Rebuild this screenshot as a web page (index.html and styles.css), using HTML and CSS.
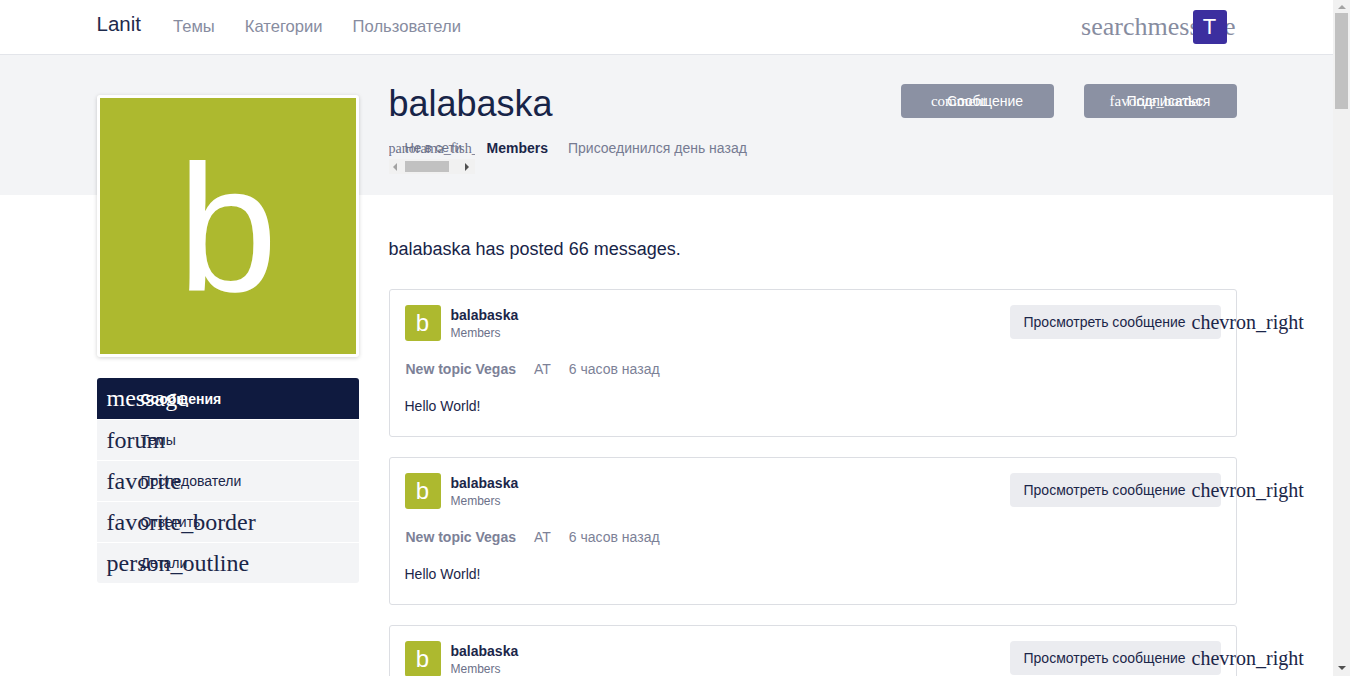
FILE: index.html
```html
<!DOCTYPE html>
<html lang="ru">
<head>
<meta charset="utf-8">
<title>balabaska</title>
<link rel="stylesheet" href="styles.css">
</head>
<body>
<div class="page">
<header class="topbar">
  <div class="container topbar-inner">
    <a class="brand">Lanit</a>
    <nav class="nav">
      <a class="nav-link">Темы</a>
      <a class="nav-link">Категории</a>
      <a class="nav-link">Пользователи</a>
    </nav>
    <div class="top-actions">
      <span class="ico ico-search">search</span>
      <span class="ico ico-msg">message</span>
      <span class="user-badge">T</span>
    </div>
  </div>
</header>

<div class="profile">
  <div class="container profile-grid">
    <aside class="sidebar">
      <div class="big-avatar">b</div>
      <ul class="menu">
        <li class="menu-item active"><span class="m-ico">message</span><span class="m-text">Сообщения</span></li>
        <li class="menu-item"><span class="m-ico">forum</span><span class="m-text">Темы</span></li>
        <li class="menu-item"><span class="m-ico">favorite</span><span class="m-text">Последователи</span></li>
        <li class="menu-item"><span class="m-ico">favorite_border</span><span class="m-text">Ответить</span></li>
        <li class="menu-item"><span class="m-ico">person_outline</span><span class="m-text">Детали</span></li>
      </ul>
    </aside>
    <main class="main">
      <section class="head">
        <div class="head-top">
          <h1 class="title">balabaska</h1>
          <div class="head-buttons">
            <button class="btn-gray"><span class="b-ico b-ico-1">comment</span>Сообщение</button>
            <button class="btn-gray"><span class="b-ico b-ico-2">favorite_border</span>Подписаться</button>
          </div>
        </div>
        <div class="meta">
          <div class="status">
            <div class="status-clip"><span class="status-inner"><span class="s-ico">panorama_fish_eye</span><span class="s-text">Не в сети</span></span></div>
            <div class="hscroll"><span class="arr-l"></span><span class="hthumb"></span><span class="arr-r"></span></div>
          </div>
          <span class="group">Members</span>
          <span class="joined">Присоединился день назад</span>
        </div>
      </section>
      <p class="count">balabaska has posted 66 messages.</p>
      <div class="posts">
        <article class="post">
          <div class="post-head">
            <div class="mini-avatar">b</div>
            <div class="author"><div class="a-name">balabaska</div><div class="a-group">Members</div></div>
            <button class="btn-light">Просмотреть сообщение<span class="chev">chevron_right</span></button>
          </div>
          <div class="post-meta"><span class="topic">New topic Vegas</span><span>AT</span><span>6 часов назад</span></div>
          <p class="post-body">Hello World!</p>
        </article>
        <article class="post">
          <div class="post-head">
            <div class="mini-avatar">b</div>
            <div class="author"><div class="a-name">balabaska</div><div class="a-group">Members</div></div>
            <button class="btn-light">Просмотреть сообщение<span class="chev">chevron_right</span></button>
          </div>
          <div class="post-meta"><span class="topic">New topic Vegas</span><span>AT</span><span>6 часов назад</span></div>
          <p class="post-body">Hello World!</p>
        </article>
        <article class="post">
          <div class="post-head">
            <div class="mini-avatar">b</div>
            <div class="author"><div class="a-name">balabaska</div><div class="a-group">Members</div></div>
            <button class="btn-light">Просмотреть сообщение<span class="chev">chevron_right</span></button>
          </div>
          <div class="post-meta"><span class="topic">New topic Vegas</span><span>AT</span><span>6 часов назад</span></div>
          <p class="post-body">Hello World!</p>
        </article>
        <article class="post">
          <div class="post-head">
            <div class="mini-avatar">b</div>
            <div class="author"><div class="a-name">balabaska</div><div class="a-group">Members</div></div>
            <button class="btn-light">Просмотреть сообщение<span class="chev">chevron_right</span></button>
          </div>
          <div class="post-meta"><span class="topic">New topic Vegas</span><span>AT</span><span>6 часов назад</span></div>
          <p class="post-body">Hello World!</p>
        </article>
      </div>
    </main>
  </div>
</div>
</div>
<div class="vscroll" aria-hidden="true">
  <span class="arr-up"></span>
  <span class="vthumb"></span>
  <span class="vspace"></span>
  <span class="arr-down"></span>
</div>
</body>
</html>
```

FILE: styles.css
```css
* { box-sizing: border-box; }
html, body { margin: 0; padding: 0; }
body {
  font-family: "Liberation Sans", Arial, sans-serif;
  color: #1b2649;
  background: #fff;
}
.page { margin-right: 17px; }
.container {
  max-width: 1140px;
  margin: 0 auto;
}
a { text-decoration: none; }

/* fake window scrollbar */
.vscroll {
  position: fixed;
  top: 0;
  right: 0;
  bottom: 0;
  width: 17px;
  background: #f1f1f1;
  display: flex;
  flex-direction: column;
  align-items: center;
}
.arr-up {
  margin-top: 5px;
  width: 0; height: 0;
  border-left: 4px solid transparent;
  border-right: 4px solid transparent;
  border-bottom: 4px solid #a3a3a3;
}
.vthumb {
  margin-top: 4px;
  width: 13px;
  height: 96px;
  background: #c1c1c1;
}
.vspace { flex: 1; }
.arr-down {
  margin-bottom: 6px;
  width: 0; height: 0;
  border-left: 4px solid transparent;
  border-right: 4px solid transparent;
  border-top: 4px solid #505050;
}

/* top bar */
.topbar {
  height: 55px;
  background: #fff;
  border-bottom: 1px solid #e3e5ea;
}
.topbar-inner {
  display: flex;
  align-items: center;
  height: 54px;
}
.brand {
  font-size: 20.5px;
  color: #1e2a4c;
  margin-top: -6px;
}
.nav {
  display: flex;
  gap: 30px;
  margin-left: 32px;
}
.nav-link {
  font-size: 16.6px;
  color: #878c9f;
}
.top-actions {
  margin-left: auto;
  margin-right: 10px;
  display: flex;
  align-items: center;
}
.ico {
  font-family: "Liberation Serif", "Times New Roman", serif;
  font-size: 26px;
  color: #878c9f;
  white-space: nowrap;
  display: inline-block;
  overflow: visible;
}
.ico-msg { width: 45px; }
.user-badge {
  position: relative;
  z-index: 1;
  width: 34px;
  height: 34px;
  border-radius: 3px;
  background: #3c2f9f;
  color: #fff;
  font-size: 22px;
  display: flex;
  align-items: center;
  justify-content: center;
}

/* profile */
.profile {
  background: linear-gradient(#f3f4f6 0, #f3f4f6 140px, #fff 140px);
  padding-bottom: 40px;
}
.profile-grid {
  display: grid;
  grid-template-columns: 262px 1fr;
  column-gap: 30px;
  align-items: start;
}
.sidebar { padding-top: 40px; }
.big-avatar {
  width: 262px;
  height: 262px;
  background: #adb92f;
  border: 3px solid #fff;
  border-radius: 3px;
  box-shadow: 0 1px 4px rgba(0,0,0,0.18);
  color: #fff;
  font-size: 180px;
  line-height: 262px;
  text-align: center;
}
.menu {
  list-style: none;
  margin: 21px 0 0;
  padding: 0;
  border-radius: 3px;
}
.menu-item {
  display: flex;
  align-items: center;
  height: 41px;
  padding-left: 10px;
  background: #f3f4f6;
  border-bottom: 1px solid #fff;
  font-size: 14px;
  color: #1b2649;
}
.menu-item:last-child { border-bottom: none; height: 40px; border-radius: 0 0 3px 3px; }
.menu-item.active {
  background: #0f1a3f;
  color: #fff;
  font-weight: bold;
  border-radius: 3px 3px 0 0;
  border-bottom: none;
  height: 41px;
  margin-bottom: 1px;
}
.m-ico {
  width: 24px;
  font-family: "Liberation Serif", "Times New Roman", serif;
  font-size: 24px;
  font-weight: normal;
  white-space: nowrap;
  overflow: visible;
  flex: none;
  margin-right: 10px;
}
.m-text { position: relative; }

/* main head */
.head {
  height: 140px;
  padding-top: 28px;
}
.head-top {
  display: flex;
  align-items: flex-start;
}
.title {
  margin: 0;
  font-size: 36px;
  font-weight: normal;
  line-height: 41px;
  color: #172448;
}
.head-buttons {
  margin-left: auto;
  display: flex;
  gap: 30px;
  padding-top: 1px;
}
.btn-gray {
  width: 153px;
  height: 34px;
  border: none;
  border-radius: 4px;
  background: #8b91a3;
  color: #fff;
  font-family: "Liberation Sans", Arial, sans-serif;
  font-size: 14px;
  display: flex;
  align-items: center;
  justify-content: center;
  padding: 0;
}
.b-ico {
  font-family: "Liberation Serif", "Times New Roman", serif;
  font-size: 15px;
  white-space: nowrap;
  overflow: visible;
  display: inline-block;
}
.b-ico-1 { width: 16px; }
.b-ico-2 { width: 17px; }

.meta {
  display: flex;
  align-items: flex-start;
  margin-top: 16px;
  font-size: 14px;
  line-height: 16px;
}
.status {
  width: 86px;
  margin-right: 12px;
}
.status-clip {
  width: 86px;
  overflow: hidden;
  white-space: nowrap;
}
.status-inner {
  display: inline-block;
  position: relative;
  color: #6c7189;
}
.s-ico {
  font-family: "Liberation Serif", "Times New Roman", serif;
  font-size: 14px;
}
.s-text {
  position: absolute;
  left: 16px;
  top: 0;
  font-size: 13px;
  color: #6c7189;
}
.hscroll {
  margin-top: 2px;
  height: 15px;
  background: #f1f1f1;
  display: flex;
  align-items: center;
  padding: 0 4px;
}
.arr-l {
  width: 0; height: 0;
  border-top: 4px solid transparent;
  border-bottom: 4px solid transparent;
  border-right: 4px solid #a3a3a3;
}
.hthumb {
  margin-left: 8px;
  width: 44px;
  height: 11px;
  background: #c1c1c1;
}
.arr-r {
  margin-left: auto;
  margin-right: 2px;
  width: 0; height: 0;
  border-top: 4px solid transparent;
  border-bottom: 4px solid transparent;
  border-left: 4px solid #505050;
}
.group {
  font-weight: bold;
  color: #1b2649;
  margin-right: 20px;
}
.joined { color: #767b92; }

.count {
  margin: 44px 0 29px;
  font-size: 18px;
  line-height: 21px;
  color: #172448;
}

/* posts */
.posts {
  display: flex;
  flex-direction: column;
  gap: 20px;
}
.post {
  border: 1px solid #dcdee3;
  border-radius: 3px;
  padding: 15px 15px 21px;
  height: 148px;
}
.post-head {
  display: flex;
  align-items: flex-start;
}
.mini-avatar {
  width: 36px;
  height: 36px;
  border-radius: 3px;
  background: #adb92f;
  color: #fff;
  font-size: 24px;
  line-height: 36px;
  text-align: center;
  flex: none;
}
.author {
  margin-left: 10px;
  padding-top: 2px;
}
.a-name {
  font-size: 14px;
  font-weight: bold;
  color: #1b2649;
  line-height: 16px;
}
.a-group {
  font-size: 12px;
  color: #6c7189;
  line-height: 16px;
  margin-top: 2px;
}
.btn-light {
  margin-left: auto;
  width: 211px;
  height: 34px;
  border: none;
  border-radius: 4px;
  background: #ebecf0;
  color: #1b2649;
  font-family: "Liberation Sans", Arial, sans-serif;
  font-size: 14px;
  padding: 0 0 0 14px;
  display: flex;
  align-items: center;
  white-space: nowrap;
}
.chev {
  display: inline-block;
  width: 15px;
  margin-left: 6px;
  font-family: "Liberation Serif", "Times New Roman", serif;
  font-size: 20px;
  overflow: visible;
  white-space: nowrap;
  text-align: left;
}
.post-meta {
  display: flex;
  gap: 18px;
  margin-top: 20px;
  padding-left: 1px;
  font-size: 14px;
  line-height: 16px;
  color: #7c8197;
}
.topic { font-weight: bold; }
.post-body {
  margin: 21px 0 0;
  font-size: 14px;
  line-height: 16px;
  color: #1b2649;
}
```
